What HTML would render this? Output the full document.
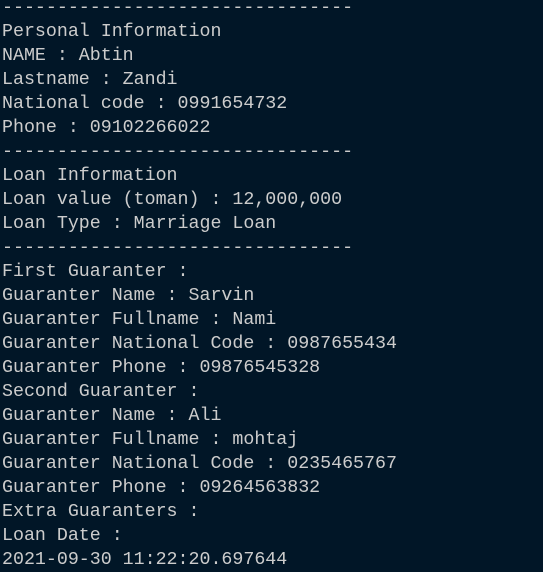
<!DOCTYPE html>
<html><head><meta charset="utf-8"><style>
html,body{margin:0;padding:0;background:#011627;width:543px;height:570px;overflow:hidden}
pre{margin:0;position:absolute;left:2px;top:-4px;font-family:"Liberation Mono",monospace;font-size:18.3px;line-height:24px;color:#cccccc;white-space:pre}
</style></head><body><pre>--------------------------------
Personal Information
NAME : Abtin
Lastname : Zandi
National code : 0991654732
Phone : 09102266022
--------------------------------
Loan Information
Loan value (toman) : 12,000,000
Loan Type : Marriage Loan
--------------------------------
First Guaranter :
Guaranter Name : Sarvin
Guaranter Fullname : Nami
Guaranter National Code : 0987655434
Guaranter Phone : 09876545328
Second Guaranter :
Guaranter Name : Ali
Guaranter Fullname : mohtaj
Guaranter National Code : 0235465767
Guaranter Phone : 09264563832
Extra Guaranters :
Loan Date :
2021-09-30 11:22:20.697644</pre></body></html>
